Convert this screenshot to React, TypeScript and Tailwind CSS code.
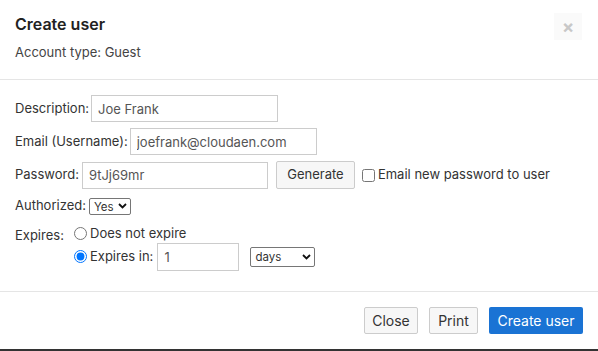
import { useState } from 'react';

function Chevron() {
  return (
    <svg width="9" height="6" viewBox="0 0 9 6" className="pointer-events-none absolute right-[4px] top-1/2 -translate-y-1/2">
      <path d="M1 1l3.5 3.5L8 1" fill="none" stroke="#111" strokeWidth="1.8" />
    </svg>
  );
}

function MiniSelect({ value, options, className }: { value: string; options: string[]; className: string }) {
  const [v, setV] = useState(value);
  return (
    <div className={`relative ${className}`}>
      <select
        value={v}
        onChange={(e) => setV(e.target.value)}
        className="h-full w-full appearance-none rounded-[2px] border border-[#767676] bg-white pl-[4px] text-[11.5px] text-[#333] outline-none"
      >
        {options.map((o) => <option key={o}>{o}</option>)}
      </select>
      <Chevron />
    </div>
  );
}

const input = 'h-[27px] border border-[#ccc] bg-white px-[6px] text-[13px] text-[#555] outline-none';

export default function App() {
  const [expiry, setExpiry] = useState('in');
  return (
    <div className="h-[351px] w-[598px] bg-[#333] font-['Inter','Liberation_Sans',sans-serif] text-[13px] text-[#333]">
      <div className="flex h-[349px] flex-col bg-white">
        <header className="flex h-[80px] justify-between border-b border-[#e5e5e5] pl-[15px] pr-[16px] pt-[13px]">
          <div>
            <h1 className="text-[16px] font-semibold leading-[22px] text-[#222]">Create user</h1>
            <p className="mt-[7px] leading-[20px] text-[#444]">Account type: Guest</p>
          </div>
          <button className="flex h-[27px] w-[28px] items-center justify-center bg-[#fafafa] text-[18px] font-bold leading-none text-[#c8c8c8]">×</button>
        </header>

        <section className="flex h-[211px] flex-col px-[15px] pt-[15px]">
          <label className="flex items-center gap-[2px]">
            Description:
            <input className={`${input} w-[187px]`} defaultValue="Joe Frank" />
          </label>
          <label className="mt-[6px] flex items-center gap-[2px]">
            Email (Username):
            <input className={`${input} w-[187px]`} defaultValue="joefrank@cloudaen.com" />
          </label>
          <div className="mt-[6px] flex items-center">
            <label className="flex items-center gap-[3px]">
              Password:
              <input className={`${input} w-[186px]`} defaultValue="9tJj69mr" />
            </label>
            <button className="ml-[8px] h-[28px] w-[79px] rounded-[2px] border border-[#ccc] bg-[#f7f7f7] text-[13px] text-[#333]">Generate</button>
            <label className="ml-[7px] flex items-center gap-[3px]">
              <input type="checkbox" className="m-0 h-[13px] w-[13px]" />
              Email new password to user
            </label>
          </div>
          <div className="mt-[7px] flex items-center gap-[3px]">
            Authorized:
            <MiniSelect value="Yes" options={['Yes', 'No']} className="h-[17px] w-[42px]" />
          </div>
          <div className="mt-[9px] flex">
            <span className="w-[59px] pt-[1px]">Expires:</span>
            <div className="flex flex-col">
              <label className="flex h-[18px] items-center gap-[3px]">
                <input type="radio" name="exp" checked={expiry === 'never'} onChange={() => setExpiry('never')} className="m-0 h-[13px] w-[13px]" />
                Does not expire
              </label>
              <div className="flex items-center">
                <label className="flex items-center gap-[3px]">
                  <input type="radio" name="exp" checked={expiry === 'in'} onChange={() => setExpiry('in')} className="m-0 h-[13px] w-[13px]" />
                  Expires in:
                </label>
                <input className={`${input} ml-[4px] h-[28px] w-[82px]`} defaultValue="1" />
                <MiniSelect value="days" options={['days', 'weeks', 'months']} className="ml-[11px] h-[20px] w-[65px]" />
              </div>
            </div>
          </div>
        </section>

        <footer className="flex flex-1 items-start justify-end gap-[11px] border-t border-[#e5e5e5] pr-[15px] pt-[15px] text-[14px]">
          <button className="h-[27px] w-[54px] rounded-[2px] border border-[#ccc] bg-[#f7f7f7] text-[#333]">Close</button>
          <button className="h-[27px] w-[49px] rounded-[2px] border border-[#ccc] bg-[#f7f7f7] text-[#333]">Print</button>
          <button className="h-[27px] w-[94px] rounded-[2px] bg-[#1a73d4] text-white">Create user</button>
        </footer>
      </div>
    </div>
  );
}
